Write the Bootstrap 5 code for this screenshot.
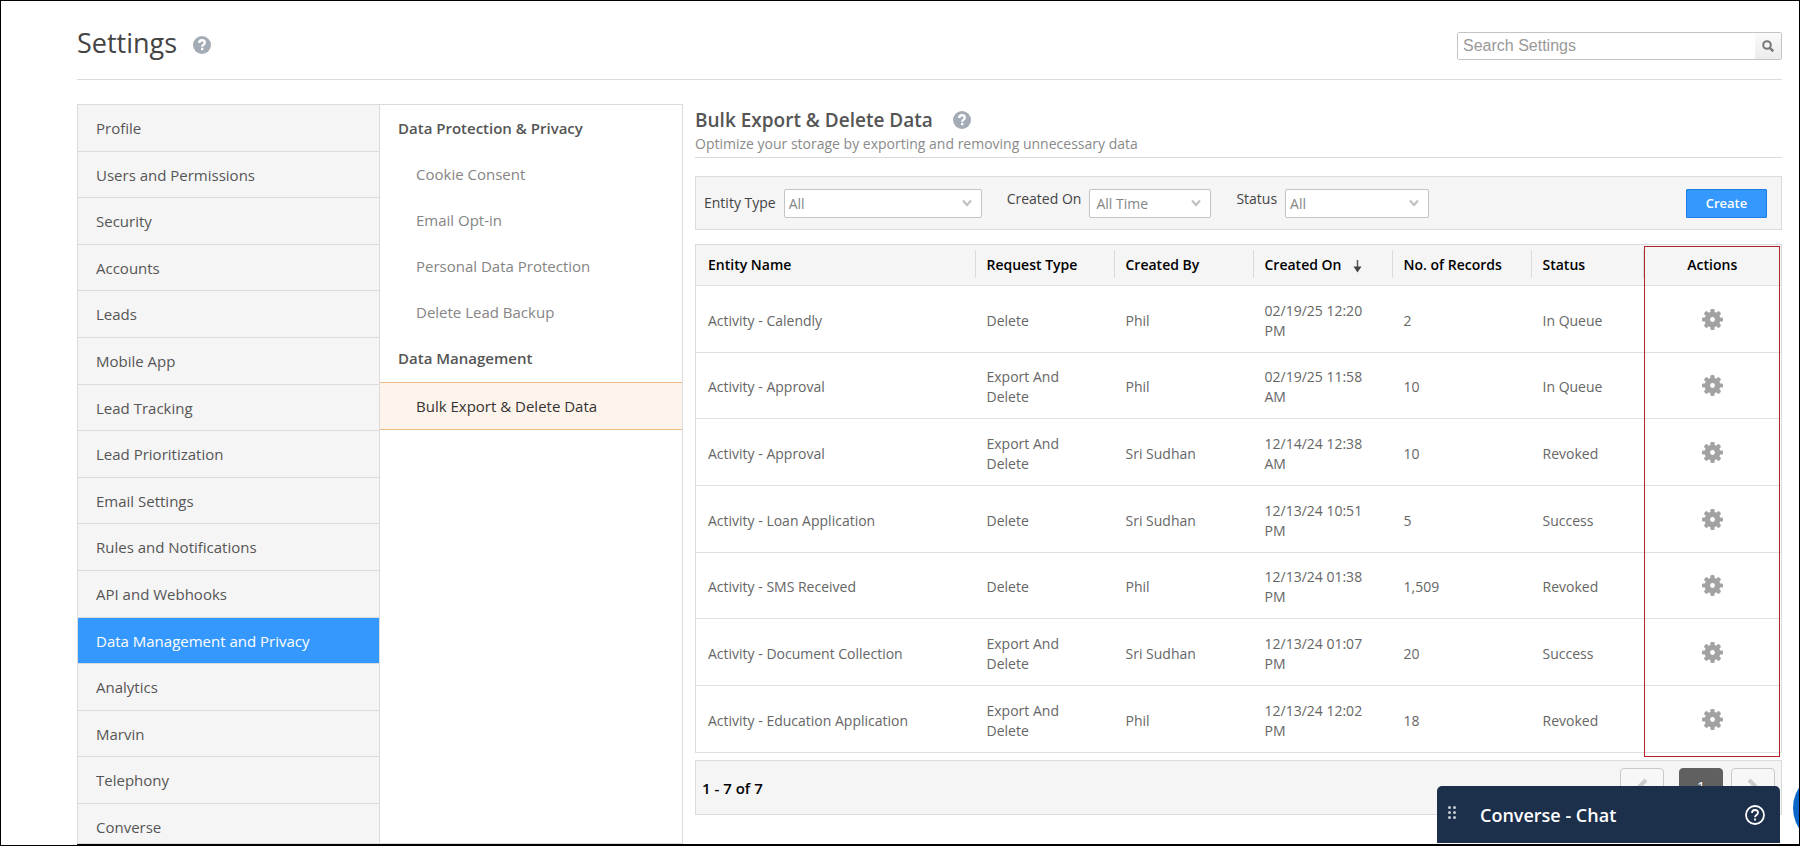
<!DOCTYPE html>
<html lang="en">
<head>
<meta charset="utf-8">
<meta name="viewport" content="width=device-width, initial-scale=1">
<title>Settings</title>
<link href="https://cdn.jsdelivr.net/npm/bootstrap@5.3.0/dist/css/bootstrap.min.css" rel="stylesheet">
<style>
  :root { --line: #dadbdc; --panel: #f5f5f5; --accent: #3598fe; }
  body { font-family: "Open Sans", "Noto Sans", sans-serif; font-size: 14px; line-height: 20px; color: #666; background: #fff; }
  .app-frame { border: 1px solid #000; }
  .page-head { margin: 0 17px 0 76px; height: 79px; border-bottom: 1px solid var(--line); padding-top: 12px; }
  .page-head h1 { font-size: 27px; line-height: 36px; color: #444; }
  .page-title { padding-bottom: 6px; }
  .help-btn { border: 0; background: none; padding: 0; line-height: 0; }
  .search-box { width: 325px; height: 28px; border: 1px solid #c4c4c4; border-radius: 2px; }
  .search-box input { font: 16px "Liberation Sans", Arial, sans-serif; color: #555; border: 0; padding: 0 5px; outline: 0; }
  .search-box input::placeholder { color: #999; opacity: 1; }
  .search-box button { width: 26px; border: 0; padding: 0; line-height: 0; background: linear-gradient(#fafafa, #ececec); }
  .workspace { margin-left: 76px; padding: 24px 17px 0 0; border-bottom: 1px solid #000; }
  .side-nav { width: 303px; border: 1px solid var(--line); background: var(--panel); font-size: 15px; }
  .side-nav a { display: flex; align-items: center; height: 47px; padding: 0 18px; color: #555; text-decoration: none; border-bottom: 1px solid var(--line); }
  .side-nav li:nth-child(5n+2) a, .side-nav li:nth-child(5n+4) a { height: 46px; }
  .side-nav a.active { background: var(--accent); color: #fff; }
  .sub-nav { width: 303px; border: 1px solid var(--line); border-left: 0; font-size: 15px; }
  .sub-nav h2 { font-size: 15px; font-weight: 600; line-height: 46px; color: #555; padding-left: 18px; }
  .sub-nav a { display: block; line-height: 46px; padding-left: 36px; color: #858585; text-decoration: none; }
  .sub-nav a + h2 { line-height: 47px; }
  .sub-nav a.active { color: #333; background: #fff4eb; border: solid #ecba86; border-width: 1px 0; }
  .content-col { padding-left: 12px; }
  .content-head { border-bottom: 1px solid var(--line); height: 54px; }
  .content-head h2 { font-size: 19px; font-weight: 600; line-height: 32px; color: #555; }
  .content-head p { line-height: 16px; color: #8a8a8a; }
  .filter-bar { margin-top: 18px; height: 54px; padding: 0 14px 0 8px; background: var(--panel); border: 1px solid var(--line); color: #444; }
  .filter-bar label { font-weight: 500; color: #444; }
  .filter-bar select { height: 29px; font-size: 14px; line-height: 20px; color: #858585; border: 1px solid #c4c4c4; border-radius: 2px; padding: 1px 28px 0 4px; appearance: none;
    background: #fff url("data:image/svg+xml,%3Csvg xmlns='http://www.w3.org/2000/svg' width='10' height='8' viewBox='0 0 10 8'%3E%3Cpath d='M1 1.5l4 4.500 4-4.500' fill='none' stroke='%23c2c2c2' stroke-width='2.200'/%3E%3C/svg%3E") no-repeat right 9px center; }
  .pick-entity { width: 198px; margin-right: 25px; }
  .filter-bar .pick-date { width: 122px; margin-right: 25px; padding-left: 6px; }
  .pick-status { width: 144px; }
  .create-btn { width: 81px; height: 29px; padding: 0; border: 1px solid #1b7ede; border-radius: 1px; background: var(--accent); color: #fff; font-size: 13px; font-weight: 600; }
  .table-wrap { margin-top: 14px; }
  .records { table-layout: fixed; border: 1px solid var(--line); }
  .records th { height: 41px; padding: 0 0 0 11px; background: var(--panel); color: #000; font-weight: 600; background-image: linear-gradient(var(--line), var(--line)); background-size: 1px 28px; background-position: right 5px; background-repeat: no-repeat; white-space: nowrap; }
  .records th:last-child { background-image: none; padding: 0; }
  .records td { height: 67px; padding: 3px 20px 0 11px; vertical-align: middle; }
  .records tr > :first-child { padding-left: 12px; }
  .records tr { border-bottom: 1px solid #e0e0e0; }
  .records tbody tr:nth-child(3n+2) td { height: 66px; }
  .records td:last-child { padding: 0; text-align: center; }
  .records td button { border: 0; padding: 0; background: none; line-height: 0; }
  .c-mid { width: 139px; }
  .c-status { width: 112px; }
  .c-actions { width: 138px; }
  .mark-frame { inset: 2px 2px -4px auto; width: 136px; border: 1px solid #b0262c; pointer-events: none; }
  .pager { margin-top: 7px; height: 55px; padding: 7px 6px 0 6px; background: var(--panel); border: 1px solid var(--line); }
  .pager strong { font-size: 15px; font-weight: 600; color: #000; line-height: 40px; }
  .page-btn { width: 44px; height: 38px; padding: 0; border: 1px solid #c9c9c9; border-radius: 4px; background: #f7f7f7; line-height: 0; }
  .page-btn.current { background: #606060; border-color: #606060; color: #fff; margin-right: 8px; margin-left: 15px; font-size: 14px; }
  .chat-dock { right: 20px; bottom: 3px; width: 343px; height: 57px; padding: 0 15px 0 11px; border-radius: 5px 5px 0 0; background: #1d304b; color: #fff; }
  .chat-dock .title { font-size: 18px; font-weight: 600; }
  .chat-dock button { border: 0; padding: 0; background: none; line-height: 0; }
  .chat-bubble { left: calc(100% - 7px); bottom: 0; width: 76px; height: 76px; border: 0; border-radius: 50%; background: #0a66c9; }
  .edge-line { top: 0; right: 0; width: 1px; background: #000; }
</style>
</head>
<body>
<svg class="d-none" aria-hidden="true">
  <symbol id="help" viewBox="0 0 18 18"><circle cx="9" cy="9" r="9" fill="#a3abb5"/><path d="M6.200 7c0-1.700 1.200-2.700 2.800-2.700s2.800.9 2.800 2.400c0 1.900-2.600 1.900-2.600 4" fill="none" stroke="#fff" stroke-width="2.400"/><rect x="8" y="11.800" width="2.400" height="2.400" fill="#fff"/></symbol>
  <symbol id="gear" viewBox="0 0 20 20"><g fill="#a2a2a2"><circle cx="10" cy="10" r="7.500"/><rect x="8" y="0" width="4" height="20" rx="1.200"/><rect x="8" y="0" width="4" height="20" rx="1.200" transform="rotate(45 10 10)"/><rect x="8" y="0" width="4" height="20" rx="1.200" transform="rotate(90 10 10)"/><rect x="8" y="0" width="4" height="20" rx="1.200" transform="rotate(135 10 10)"/></g><circle cx="10" cy="10" r="2.300" fill="#fff"/></symbol>
</svg>

<div class="app-frame vh-100 overflow-hidden d-flex flex-column">
  <header class="page-head d-flex align-items-center justify-content-between flex-shrink-0">
    <div class="page-title d-flex align-items-center gap-3">
      <h1 class="m-0 fw-normal">Settings</h1>
      <button class="help-btn pt-1" type="button" aria-label="Settings help"><svg width="18" height="18"><use href="#help"/></svg></button>
    </div>
    <form class="search-box d-flex" role="search">
      <input class="flex-fill" type="search" placeholder="Search Settings" aria-label="Search Settings">
      <button type="button" aria-label="Search"><svg width="12" height="12" viewBox="0 0 12 12" fill="none" stroke="#777" stroke-width="2"><circle cx="5" cy="5" r="3.800"/><path d="M7.800 7.800l3.500 3.500" stroke-width="2.500"/></svg></button>
    </form>
  </header>

  <div class="workspace d-flex flex-fill overflow-hidden">
    <nav class="side-nav flex-shrink-0" aria-label="Settings sections">
      <ul class="list-unstyled m-0">
        <li><a href="#">Profile</a></li>
        <li><a href="#">Users and Permissions</a></li>
        <li><a href="#">Security</a></li>
        <li><a href="#">Accounts</a></li>
        <li><a href="#">Leads</a></li>
        <li><a href="#">Mobile App</a></li>
        <li><a href="#">Lead Tracking</a></li>
        <li><a href="#">Lead Prioritization</a></li>
        <li><a href="#">Email Settings</a></li>
        <li><a href="#">Rules and Notifications</a></li>
        <li><a href="#">API and Webhooks</a></li>
        <li><a href="#" class="active" aria-current="true">Data Management and Privacy</a></li>
        <li><a href="#">Analytics</a></li>
        <li><a href="#">Marvin</a></li>
        <li><a href="#">Telephony</a></li>
        <li><a href="#">Converse</a></li>
      </ul>
    </nav>

    <nav class="sub-nav flex-shrink-0" aria-label="Data Management and Privacy">
      <h2 class="m-0">Data Protection &amp; Privacy</h2>
      <a href="#">Cookie Consent</a>
      <a href="#">Email Opt-in</a>
      <a href="#">Personal Data Protection</a>
      <a href="#">Delete Lead Backup</a>
      <h2 class="m-0">Data Management</h2>
      <a href="#" class="active" aria-current="page">Bulk Export &amp; Delete Data</a>
    </nav>

    <main class="content-col flex-fill">
      <div class="content-head">
        <div class="d-flex align-items-center gap-3">
          <h2 class="m-0 pe-1">Bulk Export &amp; Delete Data</h2>
          <button class="help-btn" type="button" aria-label="Bulk export help"><svg width="18" height="18"><use href="#help"/></svg></button>
        </div>
        <p class="m-0">Optimize your storage by exporting and removing unnecessary data</p>
      </div>

      <form class="filter-bar d-flex align-items-center">
        <label class="me-2" for="entity">Entity Type</label>
        <select class="pick-entity" id="entity"><option>All</option></select>
        <label class="pb-2 me-2" for="created">Created On</label>
        <select class="pick-date" id="created"><option>All Time</option></select>
        <label class="pb-2 me-2" for="status">Status</label>
        <select class="pick-status" id="status"><option>All</option></select>
        <button class="create-btn ms-auto" type="button">Create</button>
      </form>

      <div class="table-wrap position-relative">
        <table class="records w-100">
          <colgroup><col><col class="c-mid"><col class="c-mid"><col class="c-mid"><col class="c-mid"><col class="c-status"><col class="c-actions"></colgroup>
          <thead>
            <tr>
              <th>Entity Name</th><th>Request Type</th><th>Created By</th>
              <th>Created On <svg class="ms-2" width="9" height="13" viewBox="0 0 9 13" aria-label="sorted descending"><path d="M4.500 0v8" stroke="#555" stroke-width="1.500"/><path d="M.5 6.500h8L4.500 12.500z" fill="#444"/></svg></th>
              <th>No. of Records</th><th>Status</th><th class="text-center">Actions</th>
            </tr>
          </thead>
          <tbody>
            <tr><td>Activity - Calendly</td><td>Delete</td><td>Phil</td><td>02/19/25 12:20 PM</td><td>2</td><td class="pe-0">In Queue</td><td><button type="button" aria-label="Actions"><svg width="21" height="21"><use href="#gear"/></svg></button></td></tr>
            <tr><td>Activity - Approval</td><td>Export And Delete</td><td>Phil</td><td>02/19/25 11:58 AM</td><td>10</td><td class="pe-0">In Queue</td><td><button type="button" aria-label="Actions"><svg width="21" height="21"><use href="#gear"/></svg></button></td></tr>
            <tr><td>Activity - Approval</td><td>Export And Delete</td><td>Sri Sudhan</td><td>12/14/24 12:38 AM</td><td>10</td><td class="pe-0">Revoked</td><td><button type="button" aria-label="Actions"><svg width="21" height="21"><use href="#gear"/></svg></button></td></tr>
            <tr><td>Activity - Loan Application</td><td>Delete</td><td>Sri Sudhan</td><td>12/13/24 10:51 PM</td><td>5</td><td class="pe-0">Success</td><td><button type="button" aria-label="Actions"><svg width="21" height="21"><use href="#gear"/></svg></button></td></tr>
            <tr><td>Activity - SMS Received</td><td>Delete</td><td>Phil</td><td>12/13/24 01:38 PM</td><td>1,509</td><td class="pe-0">Revoked</td><td><button type="button" aria-label="Actions"><svg width="21" height="21"><use href="#gear"/></svg></button></td></tr>
            <tr><td>Activity - Document Collection</td><td>Export And Delete</td><td>Sri Sudhan</td><td>12/13/24 01:07 PM</td><td>20</td><td class="pe-0">Success</td><td><button type="button" aria-label="Actions"><svg width="21" height="21"><use href="#gear"/></svg></button></td></tr>
            <tr><td>Activity - Education Application</td><td>Export And Delete</td><td>Phil</td><td>12/13/24 12:02 PM</td><td>18</td><td class="pe-0">Revoked</td><td><button type="button" aria-label="Actions"><svg width="21" height="21"><use href="#gear"/></svg></button></td></tr>
          </tbody>
        </table>
        <div class="mark-frame position-absolute"></div>
      </div>

      <div class="pager d-flex align-items-start">
        <strong class="me-auto">1 - 7 of 7</strong>
        <button class="page-btn" type="button" aria-label="Previous page"><svg width="12" height="18" viewBox="0 0 12 18" fill="none" stroke="#ccc" stroke-width="4"><path d="M10 2L3 9l7 7"/></svg></button>
        <button class="page-btn current" type="button">1</button>
        <button class="page-btn" type="button" aria-label="Next page"><svg width="12" height="18" viewBox="0 0 12 18" fill="none" stroke="#ccc" stroke-width="4"><path d="M2 2l7 7-7 7"/></svg></button>
      </div>
    </main>
  </div>
</div>

<aside class="chat-dock position-fixed d-flex align-items-center" aria-label="Chat">
  <svg class="me-4 mb-1" width="8" height="13" viewBox="0 0 8 13" fill="#c5ccd6"><circle cx="1.500" cy="1.500" r="1.500"/><circle cx="6.500" cy="1.500" r="1.500"/><circle cx="1.500" cy="6.500" r="1.500"/><circle cx="6.500" cy="6.500" r="1.500"/><circle cx="1.500" cy="11.500" r="1.500"/><circle cx="6.500" cy="11.500" r="1.500"/></svg>
  <span class="title me-auto">Converse - Chat</span>
  <button type="button" aria-label="Chat help"><svg width="20" height="20" viewBox="0 0 20 20" fill="none" stroke="#fff" stroke-width="1.800"><circle cx="10" cy="10" r="9"/><path d="M7 8c0-1.800 1.300-3 3-3s3 1.100 3 2.700c0 2.200-3 2.400-3 4.600"/><path d="M10 13.600v2"/></svg></button>
</aside>
<button class="chat-bubble position-fixed" type="button" aria-label="Open assistant"></button>
<div class="edge-line position-fixed vh-100"></div>

<script src="https://cdn.jsdelivr.net/npm/bootstrap@5.3.0/dist/js/bootstrap.bundle.min.js"></script>
</body>
</html>
